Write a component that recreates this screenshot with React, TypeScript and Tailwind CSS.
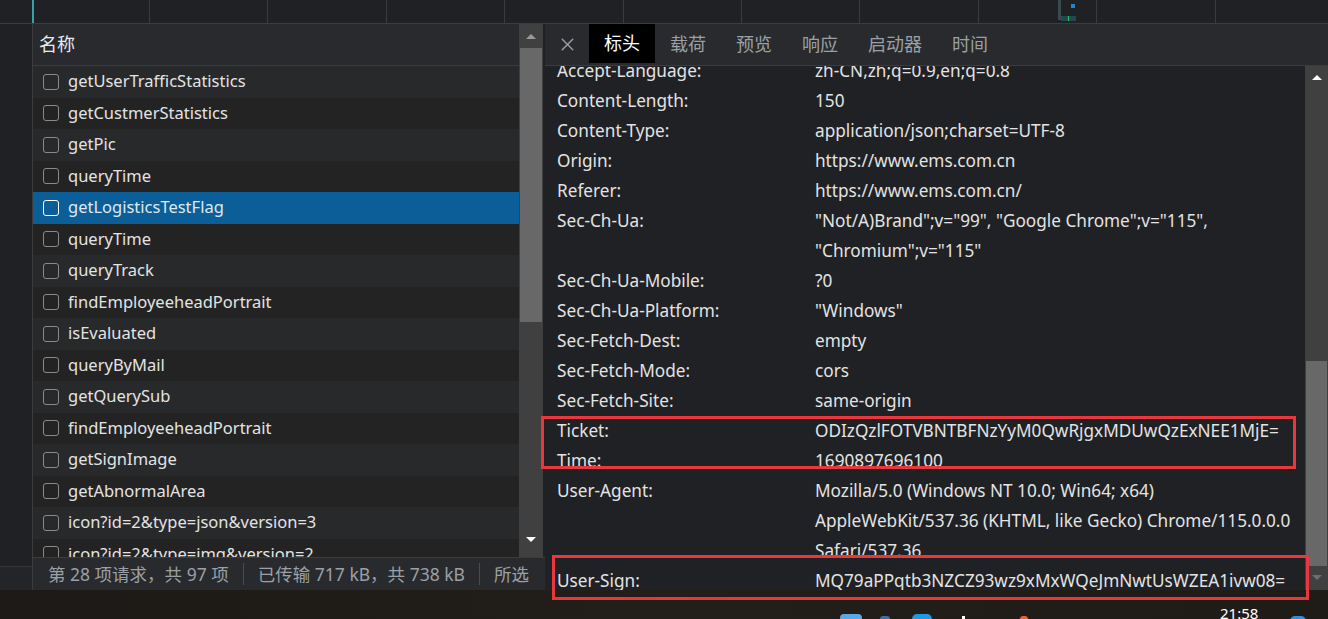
import React from 'react';
import { X } from 'lucide-react';

const requests = [
  'getUserTrafficStatistics',
  'getCustmerStatistics',
  'getPic',
  'queryTime',
  'getLogisticsTestFlag',
  'queryTime',
  'queryTrack',
  'findEmployeeheadPortrait',
  'isEvaluated',
  'queryByMail',
  'getQuerySub',
  'findEmployeeheadPortrait',
  'getSignImage',
  'getAbnormalArea',
  'icon?id=2&type=json&version=3',
  'icon?id=2&type=img&version=2',
];

const headers: [string, string[]][] = [
  ['Accept-Language:', ['zh-CN,zh;q=0.9,en;q=0.8']],
  ['Content-Length:', ['150']],
  ['Content-Type:', ['application/json;charset=UTF-8']],
  ['Origin:', ['https://www.ems.com.cn']],
  ['Referer:', ['https://www.ems.com.cn/']],
  ['Sec-Ch-Ua:', ['"Not/A)Brand";v="99", "Google Chrome";v="115",', '"Chromium";v="115"']],
  ['Sec-Ch-Ua-Mobile:', ['?0']],
  ['Sec-Ch-Ua-Platform:', ['"Windows"']],
  ['Sec-Fetch-Dest:', ['empty']],
  ['Sec-Fetch-Mode:', ['cors']],
  ['Sec-Fetch-Site:', ['same-origin']],
  ['Ticket:', ['ODIzQzlFOTVBNTBFNzYyM0QwRjgxMDUwQzExNEE1MjE=']],
  ['Time:', ['1690897696100']],
  ['User-Agent:', ['Mozilla/5.0 (Windows NT 10.0; Win64; x64)', 'AppleWebKit/537.36 (KHTML, like Gecko) Chrome/115.0.0.0', 'Safari/537.36']],
];

const tabs = ['标头', '载荷', '预览', '响应', '启动器', '时间'];

function Arrow({ up, color }: { up?: boolean; color: string }) {
  return (
    <svg width="12" height="8" viewBox="0 0 12 8">
      <polygon points={up ? '1,7 6,2 11,7' : '1,1 6,6 11,1'} fill={color} />
    </svg>
  );
}

function Checkbox({ active }: { active?: boolean }) {
  return (
    <div
      className={`w-[16px] h-[16px] rounded-[3px] border-[1.5px] shrink-0 ${
        active ? 'border-white' : 'border-[#8a8a8a]'
      }`}
    />
  );
}

export default function App() {
  const font = { fontFamily: '"Noto Sans", "Noto Sans CJK SC", sans-serif' };
  return (
    <div
      className="relative w-[1328px] h-[619px] overflow-hidden bg-[#202124] flex flex-col text-[#e3e3e3]"
      style={font}
    >
      {/* waterfall strip */}
      <div className="relative h-[24px] flex border-b border-[#3c3c3c] shrink-0">
        <div className="w-[32px] shrink-0" />
        <div className="w-[118px] shrink-0 border-l-2 border-[#3aa1a9] border-r border-r-[#3a3b3e]" />
        {Array.from({ length: 9 }).map((_, i) => (
          <div key={i} className="w-[118.4px] shrink-0 border-r border-[#3a3b3e]" />
        ))}
        <div className="absolute left-[1058px] top-0 w-[3px] h-[20px] bg-[#3a4a50]" />
        <div className="absolute left-[1071px] top-[4px] w-[4px] h-[4px] bg-[#1e88c8]" />
        <div className="absolute left-[1061px] top-[16px] w-[15px] h-[5px] bg-[#24484f]" />
        <div className="absolute left-[1068px] top-[16px] w-[1px] h-[5px] bg-[#27c46a]" />
      </div>

      <div className="flex h-[566px] shrink-0">
        {/* far left strip */}
        <div className="w-[32px] shrink-0 flex flex-col">
          <div className="flex-1" />
          <div className="h-[24px] bg-[#242528] border-t border-[#35363a]" />
        </div>

        {/* request list */}
        <div className="w-[513px] shrink-0 flex flex-col border-l border-[#3c3c3c]">
          <div className="flex flex-1 min-h-0">
            <div className="flex-1 flex flex-col min-w-0">
              <div className="h-[42px] bg-[#292a2d] border-b border-[#3c3c3c] flex items-center pl-[6px] text-[18px] text-[#e8eaed] shrink-0">
                名称
              </div>
              <div className="flex-1 overflow-hidden">
                {requests.map((name, i) => {
                  const sel = i === 4;
                  return (
                    <div
                      key={i}
                      className={`h-[31.5px] flex items-center gap-[9px] pl-[10px] text-[16.5px] whitespace-nowrap ${
                        sel ? 'bg-[#0c5e98] text-[#dfe8f0]' : i % 2 === 0 ? 'bg-[#28292b]' : 'bg-[#232324]'
                      }`}
                    >
                      <Checkbox active={sel} />
                      <span>{name}</span>
                    </div>
                  );
                })}
              </div>
            </div>
            <div className="w-[24px] bg-[#404040] flex flex-col items-center shrink-0 mr-[2px]">
              <div className="h-[24px] flex items-center justify-center">
                <Arrow up color="#9a9a9a" />
              </div>
              <div className="w-[22px] h-[274px] bg-[#686868]" />
              <div className="flex-1" />
              <div className="h-[34px] flex items-center justify-center">
                <Arrow color="#ffffff" />
              </div>
            </div>
          </div>
          <div className="h-[33px] bg-[#292a2d] border-t border-[#3c3c3c] flex items-center pl-[15px] text-[17.5px] text-[#9aa0a6] whitespace-nowrap overflow-hidden shrink-0">
            <span>第 28 项请求，共 97 项</span>
            <div className="w-[1px] h-[22px] bg-[#4a4b4f] mx-[14px] shrink-0" />
            <span>已传输 717 kB，共 738 kB</span>
            <div className="w-[1px] h-[22px] bg-[#4a4b4f] mx-[14px] shrink-0" />
            <span>所选</span>
          </div>
        </div>

        {/* details */}
        <div className="flex-1 flex flex-col min-w-0">
          <div className="h-[42px] bg-[#292a2d] border-b border-[#3c3c3c] flex items-stretch shrink-0">
            <div className="w-[44px] flex items-center justify-center text-[#9aa0a6]">
              <X size={21} strokeWidth={1.6} />
            </div>
            {tabs.map((t, i) => (
              <div
                key={t}
                className={`px-[15px] flex items-center text-[18px] ${
                  i === 0 ? 'bg-black text-white mb-[2px]' : 'text-[#9aa0a6]'
                }`}
              >
                {t}
              </div>
            ))}
          </div>
          <div className="flex flex-1 min-h-0">
            <div className="flex-1 overflow-hidden pl-[12px] text-[17.2px] text-[#e3e3e3]">
              <div className="-mt-[10px]">
                {headers.map(([k, vals]) =>
                  vals.map((v, j) => (
                    <div
                      key={k + j}
                      className={`flex whitespace-nowrap leading-[30px] ${
                        v === 'Safari/537.36' ? 'h-[21px] overflow-hidden items-start' : 'h-[30px]'
                      }`}
                    >
                      <div className="w-[258px] shrink-0">{j === 0 ? k : ''}</div>
                      <div>{v}</div>
                    </div>
                  ))
                )}
                <div className="flex whitespace-nowrap leading-[30px] h-[30px] mt-[9px]">
                  <div className="w-[258px] shrink-0">User-Sign:</div>
                  <div>MQ79aPPqtb3NZCZ93wz9xMxWQeJmNwtUsWZEA1ivw08=</div>
                </div>
              </div>
            </div>
            <div className="w-[23px] bg-[#404040] flex flex-col items-center shrink-0">
              <div className="h-[22px] flex items-center justify-center">
                <Arrow up color="#ffffff" />
              </div>
              <div className="flex-1" />
              <div className="w-[21px] h-[205px] bg-[#686868]" />
              <div className="h-[24px] flex items-center justify-center">
                <Arrow color="#6e6e6e" />
              </div>
            </div>
          </div>
        </div>
      </div>

      {/* taskbar */}
      <div className="relative flex-1 bg-gradient-to-r from-[#1d1a17] via-[#221e19] to-[#1f1c18] overflow-hidden">
        <div className="absolute left-[840px] top-[24px] w-[22px] h-[10px] rounded-[4px] bg-[#5aa9e6]" />
        <div className="absolute left-[880px] top-[26px] w-[10px] h-[6px] rounded-full bg-[#3d6fa8]" />
        <div className="absolute left-[912px] top-[24px] w-[20px] h-[10px] rounded-full bg-[#1b9be6]" />
        <div className="absolute left-[962px] top-[26px] w-[3px] h-[3px] bg-white" />
        <div className="absolute left-[1020px] top-[26px] w-[8px] h-[6px] rounded-full bg-[#e8622c]" />
        <div className="absolute left-[1220px] top-[16px] text-[15px] text-white leading-none">21:58</div>
        <div className="absolute left-[1290px] top-[26px] w-[16px] h-[10px] rounded-full bg-[#2f8ee0]" />
      </div>

      {/* annotation boxes */}
      <div className="absolute left-[541px] top-[416px] w-[755px] h-[53px] border-[3px] border-[#e8383d]" />
      <div className="absolute left-[552px] top-[555px] w-[757px] h-[45px] border-[3px] border-[#e8383d]" />
    </div>
  );
}
